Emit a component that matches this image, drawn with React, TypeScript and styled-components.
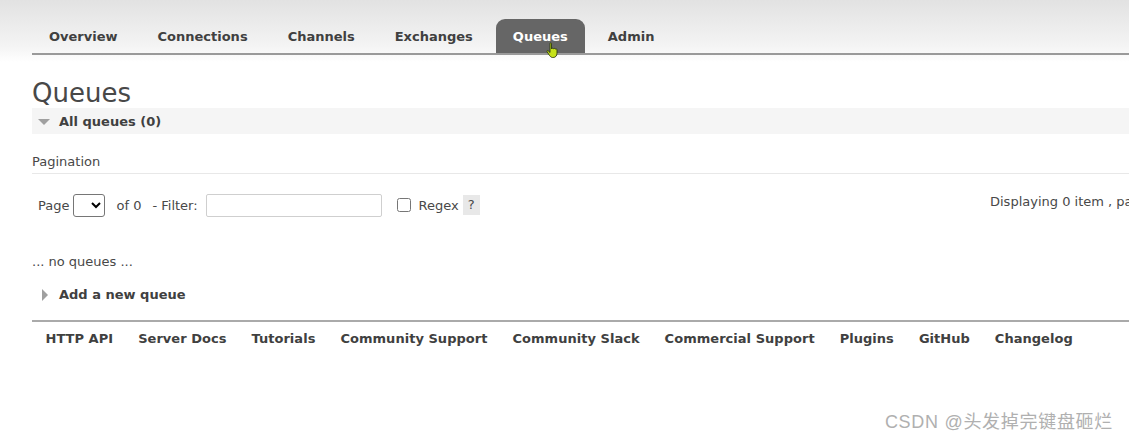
import styled, { createGlobalStyle } from 'styled-components';

const GlobalStyle = createGlobalStyle`
  html, body {
    margin: 0;
    padding: 0;
    background: #fff;
    overflow: hidden;
  }
  body {
    font-family: 'DejaVu Sans', Verdana, sans-serif;
    font-size: 13px;
    color: #484848;
  }
`;

const Page = styled.div`
  position: relative;
  width: 1129px;
  height: 441px;
  overflow: hidden;
`;

const Header = styled.div`
  height: 62px;
  padding-top: 19px;
  box-sizing: border-box;
  background: linear-gradient(#e2e2e2 0%, #f4f4f4 75%, #ffffff 100%);
`;

const Nav = styled.ul`
  display: flex;
  margin: 0 0 0 32px;
  padding: 0;
  list-style: none;
  border-bottom: 2px solid #9a9a9a;
  width: 1200px;
`;

const Tab = styled.li<{ $active?: boolean }>`
  height: 34px;
  line-height: 36px;
  padding: 0 17px 0 17px;
  margin-right: 6px;
  font-weight: bold;
  font-size: 13px;
  color: ${(p) => (p.$active ? '#fff' : '#404040')};
  background: ${(p) => (p.$active ? '#666' : 'transparent')};
  border-radius: 9px 9px 0 0;
  position: relative;
`;

const Cursor = styled.svg`
  position: absolute;
  left: 50px;
  top: 23px;
`;

const Main = styled.div`
  padding-left: 32px;
  width: 1300px;
`;

const Title = styled.h1`
  margin: 16px 0 0 0;
  font-size: 26px;
  line-height: 30px;
  font-weight: normal;
  color: #484848;
`;

const SectionBar = styled.div`
  display: flex;
  align-items: center;
  height: 26px;
  background: #f5f5f5;
  font-weight: bold;
  font-size: 13px;
  color: #404040;
`;

const Arrow = styled.span<{ $open?: boolean }>`
  display: inline-block;
  width: 0;
  height: 0;
  ${(p) =>
    p.$open
      ? `border-left: 6px solid transparent;
         border-right: 6px solid transparent;
         border-top: 6px solid #a0a0a0;
         margin: 1px 9px 0 6px;`
      : `border-top: 6px solid transparent;
         border-bottom: 6px solid transparent;
         border-left: 6px solid #a0a0a0;
         margin: 0 11px 0 10px;`}
`;

const SubTitle = styled.div`
  margin-top: 20px;
  line-height: 16px;
  padding-bottom: 3px;
  border-bottom: 1px solid #e8e8e8;
  font-size: 13px;
`;

const PagerRow = styled.div`
  display: flex;
  align-items: center;
  margin-top: 19px;
  height: 24px;
`;

const PagerLeft = styled.div`
  flex: 0 0 952px;
  display: flex;
  align-items: center;
  padding-left: 6px;
`;

const PagerText = styled.span<{ $gap?: number }>`
  margin-left: ${(p) => p.$gap ?? 0}px;
  font-size: 13px;
`;

const Select = styled.select`
  width: 32px;
  height: 23px;
  margin-left: 4px;
  border: 1px solid #767676;
  border-radius: 3px;
  background: #fff;
`;

const FilterInput = styled.input`
  width: 176px;
  height: 23px;
  box-sizing: border-box;
  margin: 0 0 0 8px;
  border: 1px solid #cfcfcf;
  border-radius: 2px;
`;

const Check = styled.input`
  width: 14px;
  height: 14px;
  margin: 0 0 0 15px;
`;

const Help = styled.span`
  display: inline-block;
  width: 17px;
  height: 20px;
  line-height: 20px;
  margin-left: 4px;
  text-align: center;
  background: #e8e8e8;
  font-size: 13px;
`;

const PagerRight = styled.div`
  margin-top: -8px;
  white-space: nowrap;
  font-size: 13px;
`;

const Empty = styled.p`
  margin: 37px 0 0 0;
  line-height: 16px;
  font-size: 13px;
`;

const Toggle = styled.div`
  display: flex;
  align-items: center;
  margin-top: 17px;
  line-height: 16px;
  font-weight: bold;
  font-size: 13px;
  color: #404040;
`;

const Footer = styled.div`
  margin-top: 17px;
  border-top: 2px solid #aaa;
  display: flex;
  padding: 9px 0 0 1px;
`;

const FooterLink = styled.span`
  padding: 0 12.5px;
  line-height: 16px;
  font-weight: bold;
  font-size: 13px;
  letter-spacing: 0.03px;
  color: #404040;
`;

const Watermark = styled.div`
  position: absolute;
  right: 16px;
  bottom: 8px;
  font-family: 'Liberation Sans', 'Noto Sans CJK SC', sans-serif;
  font-size: 18px;
  color: #b0b0b0;
  letter-spacing: 0.7px;
`;

const tabs = ['Overview', 'Connections', 'Channels', 'Exchanges', 'Queues', 'Admin'];
const links = [
  'HTTP API',
  'Server Docs',
  'Tutorials',
  'Community Support',
  'Community Slack',
  'Commercial Support',
  'Plugins',
  'GitHub',
  'Changelog',
];

export default function App() {
  return (
    <Page>
      <GlobalStyle />
      <Header>
        <Nav>
          {tabs.map((t) => (
            <Tab key={t} $active={t === 'Queues'}>
              {t}
              {t === 'Queues' && (
                <Cursor width="14" height="17" viewBox="0 0 14 17">
                  <path
                    d="M4 1.5c0-.8 1.5-.8 1.5 0V7l.5-.5c.5-.6 1.5-.3 1.5.3l.3-.1c.5-.5 1.5-.2 1.5.4.6-.4 1.7-.1 1.7.7v3.5c0 2.5-1.5 4.2-3.8 4.2H6.5C5 15.5 3.8 14 2.5 12L1 9.5c-.3-.7.5-1.3 1.1-.8L4 10.5z"
                    fill="#c6e21a"
                    stroke="#2e3a10"
                    strokeWidth="0.9"
                  />
                </Cursor>
              )}
            </Tab>
          ))}
        </Nav>
      </Header>
      <Main>
        <Title>Queues</Title>
        <SectionBar>
          <Arrow $open />
          All queues (0)
        </SectionBar>
        <SubTitle>Pagination</SubTitle>
        <PagerRow>
          <PagerLeft>
            <PagerText>Page</PagerText>
            <Select />
            <PagerText $gap={11}>of 0</PagerText>
            <PagerText $gap={11}>- Filter:</PagerText>
            <FilterInput type="text" />
            <Check type="checkbox" />
            <PagerText $gap={8}>Regex</PagerText>
            <Help>?</Help>
          </PagerLeft>
          <PagerRight>Displaying 0 item , page size up to:</PagerRight>
        </PagerRow>
        <Empty>... no queues ...</Empty>
        <Toggle>
          <Arrow />
          Add a new queue
        </Toggle>
        <Footer>
          {links.map((l) => (
            <FooterLink key={l}>{l}</FooterLink>
          ))}
        </Footer>
      </Main>
      <Watermark>CSDN @头发掉完键盘砸烂</Watermark>
    </Page>
  );
}
